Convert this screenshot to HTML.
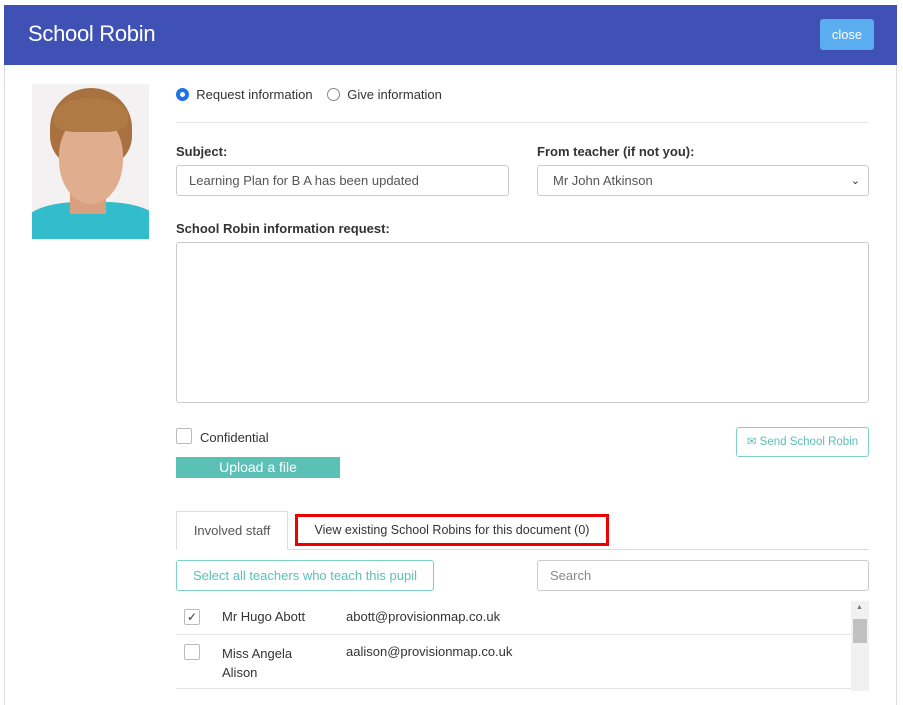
<!DOCTYPE html>
<html><head><style>
*{box-sizing:border-box}
body{margin:0;width:903px;height:691px;overflow:hidden;background:#fff;font-family:"Liberation Sans",sans-serif;font-size:13px;color:#333}
.hdr{position:absolute;left:4px;top:5px;width:893px;height:60px;background:#3f51b5}
.hdr h1{position:absolute;left:24px;top:16px;margin:0;font-weight:normal;color:#fff;font-size:22px;letter-spacing:-0.3px}
.close{position:absolute;left:816px;top:14px;width:54px;height:31px;background:#5aaef0;color:#fff;border-radius:3px;text-align:center;line-height:31px;font-size:13px}
.body{position:absolute;left:4px;top:65px;width:893px;height:640px;border-left:1px solid #ddd;border-right:1px solid #ddd}
.a{position:absolute}
.photo{left:32px;top:84px;width:117px;height:155px;background:#f3f1f1;overflow:hidden}
.in{border:1px solid #ccc;border-radius:3px;background:#fff;color:#555;padding-left:12px}
label{font-weight:bold;font-size:13px;color:#333}
.radio{width:13px;height:13px;border-radius:50%;border:1px solid #888;display:inline-block}
.cb{width:16px;height:16px;border:1px solid #bbb;border-radius:2px;background:#fff}
</style></head><body>
<div class="hdr"><h1>School Robin</h1><div class="close">close</div></div>
<div class="body"></div>
<div class="a photo">
 <div class="a" style="left:-10px;top:118px;width:140px;height:60px;border-radius:40% 40% 0 0;background:#33bccb"></div>
 <div class="a" style="left:38px;top:100px;width:36px;height:30px;background:#d9a080"></div>
 <div class="a" style="left:18px;top:4px;width:82px;height:80px;border-radius:50% 50% 40% 40%;background:#a8713f"></div>
 <div class="a" style="left:27px;top:32px;width:64px;height:88px;border-radius:45% 45% 50% 50%;background:#e0ad8f"></div>
 <div class="a" style="left:22px;top:14px;width:74px;height:34px;border-radius:50% 50% 30% 30%;background:#b07a45"></div>
</div>
<div class="a" style="left:176px;top:87px"><span class="radio" style="border:4px solid #1e73e8;vertical-align:-2px"></span>&nbsp; Request information &nbsp;&nbsp; <span class="radio" style="vertical-align:-2px"></span>&nbsp; Give information</div>
<div class="a" style="left:176px;top:122px;width:693px;height:1px;background:#e6e6e6"></div>
<label class="a" style="left:176px;top:144px">Subject:</label>
<label class="a" style="left:537px;top:144px">From teacher (if not you):</label>
<div class="a in" style="left:176px;top:165px;width:333px;height:31px;line-height:30px">Learning Plan for B A has been updated</div>
<div class="a in" style="left:537px;top:165px;width:332px;height:31px;line-height:30px;padding-left:15px">Mr John Atkinson<span style="position:absolute;right:8px;top:0;font-size:11px;color:#333">&#8964;</span></div>
<label class="a" style="left:176px;top:221px">School Robin information request:</label>
<div class="a in" style="left:176px;top:242px;width:693px;height:161px"></div>
<div class="a cb" style="left:176px;top:428px"></div>
<div class="a" style="left:200px;top:430px">Confidential</div>
<div class="a" style="left:176px;top:457px;width:164px;height:21px;background:#5bc0b5;color:#fff;text-align:center;line-height:21px;font-size:14px">Upload a file</div>
<div class="a" style="left:736px;top:427px;width:133px;height:30px;border:1px solid #7fd0c6;border-radius:3px;color:#5bc0b5;font-size:11.5px;line-height:28px;text-align:center">&#9993; Send School Robin</div>
<div class="a" style="left:176px;top:549px;width:693px;height:1px;background:#ddd"></div>
<div class="a" style="left:176px;top:511px;width:112px;height:39px;border:1px solid #ddd;border-bottom:1px solid #fff;background:#fff;text-align:center;line-height:38px;color:#555">Involved staff</div>
<div class="a" style="left:295px;top:514px;width:314px;height:32px;border:3px solid #e00;text-align:center;line-height:26px;color:#333;font-size:12.5px">View existing School Robins for this document (0)</div>
<div class="a" style="left:176px;top:560px;width:258px;height:31px;border:1px solid #7fd0c6;border-radius:3px;color:#5bc0b5;line-height:29px;text-align:center;font-size:13px">Select all teachers who teach this pupil</div>
<div class="a in" style="left:537px;top:560px;width:332px;height:31px;line-height:30px;color:#888">Search</div>
<div class="a" style="left:851px;top:601px;width:18px;height:90px;background:#f1f1f1"><div style="margin:18px 2px 0;height:24px;background:#c1c1c1"></div><div style="position:absolute;top:3px;left:5px;font-size:7px;color:#777">&#9650;</div></div>
<div class="a cb" style="left:184px;top:609px;font-size:12px;line-height:14px;text-align:center">&#10003;</div>
<div class="a" style="left:222px;top:609px">Mr Hugo Abott</div>
<div class="a" style="left:346px;top:609px">abott@provisionmap.co.uk</div>
<div class="a" style="left:176px;top:634px;width:675px;height:1px;background:#e4e4e4"></div>
<div class="a cb" style="left:184px;top:644px"></div>
<div class="a" style="left:222px;top:644px;line-height:19px">Miss Angela<br>Alison</div>
<div class="a" style="left:346px;top:644px">aalison@provisionmap.co.uk</div>
<div class="a" style="left:176px;top:688px;width:675px;height:1px;background:#e4e4e4"></div>
</body></html>
